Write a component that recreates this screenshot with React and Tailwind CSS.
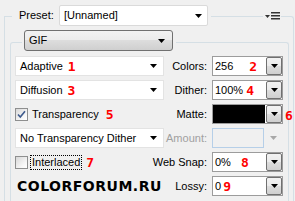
import React from "react";

const Tri = ({ color = "#000" }) => (
  <svg width="7" height="4" viewBox="0 0 7 4" className="block">
    <path d="M0 0h7L3.5 4z" fill={color} />
  </svg>
);

const Red = ({ children, className = "" }) => (
  <span className={"font-['DejaVu_Sans_Mono',monospace] font-bold text-[13px] leading-none text-[#ff0000] " + className}>
    {children}
  </span>
);

const LeftSelect = ({ children }) => (
  <div className="w-[149px] h-[20px] bg-white border border-[#e3e3e3] flex items-center justify-between pl-[4px] pr-[6px]">
    <div className="flex items-center whitespace-nowrap">{children}</div>
    <Tri />
  </div>
);

const DropBtn = () => (
  <div className="w-[16px] h-[18px] border border-[#707070] rounded-[2px] bg-[linear-gradient(#f2f2f2_0%,#ebebeb_50%,#dddddd_50%,#cfcfcf_100%)] flex items-center justify-center">
    <Tri />
  </div>
);

const Combo = ({ children }) => (
  <div className="w-[71px] h-[20px] bg-white border border-[#9c9c9c] flex items-center">
    <div className="flex-1 flex items-center pl-[2px] whitespace-nowrap">{children}</div>
    <DropBtn />
  </div>
);

const Label = ({ children, disabled }) => (
  <div className={"flex-1 min-w-0 flex justify-end whitespace-nowrap pr-[5px] " + (disabled ? "text-[#a0a0a0]" : "text-black")}>
    <span>{children}</span>
  </div>
);

const Checkbox = ({ checked }) => (
  <div className="w-[13px] h-[13px] shrink-0 border border-[#8e8f8f] bg-[linear-gradient(135deg,#d8d8d8,#f7f7f7_70%,#ffffff)] flex items-center justify-center">
    {checked && (
      <svg width="9" height="9" viewBox="0 0 9 9">
        <path d="M1 4.5l2.3 2.5L8 1.2" stroke="#3d5a8c" strokeWidth="1.6" fill="none" />
      </svg>
    )}
  </div>
);

export default function App() {
  return (
    <div className="w-[295px] h-[201px] overflow-hidden bg-[#f0f0f0] pt-[16px] pl-[4px] pr-[1px] text-[11px] leading-none text-black font-['Liberation_Sans',Arial,sans-serif]">
      <div className="h-[220px] border-t border-l border-r border-[#d5dfe5] rounded-tr-[3px]">
        {/* header */}
        <div className="flex items-center h-[21px] -mt-[12px]">
          <div className="w-[7px]" />
          <div className="bg-[#f0f0f0] h-full flex items-center pl-[7px] w-[47px]">Preset:</div>
          <div className="w-[149px] h-[21px] bg-white border border-[#dadada] rounded-[2px] flex items-center justify-between pl-[4px] pr-[5px]">
            <span>[Unnamed]</span>
            <Tri />
          </div>
          <div className="bg-[#f0f0f0] w-[3px] h-full" />
          <div className="flex-1" />
          <div className="bg-[#f0f0f0] w-[18px] h-full flex items-center justify-center">
            <svg width="15" height="8" viewBox="0 0 15 8">
              <path d="M0 3h5L2.5 6z" fill="#333" />
              <rect x="6" y="0" width="9" height="1.5" fill="#333" />
              <rect x="6" y="3" width="9" height="1.5" fill="#333" />
              <rect x="6" y="6" width="9" height="1.5" fill="#333" />
            </svg>
          </div>
          <div className="w-[12px]" />
        </div>

        {/* inner frame */}
        <div className="mt-[16px] ml-[5px] mr-[4px] h-[200px] border-t border-l border-r border-[#d5dfe5] rounded-t-[3px]">
          <div className="flex -mt-[13px]">
            <div className="w-[11px]" />
            <div className="bg-[#f0f0f0] pl-[2px] pr-[3px]">
              <div className="w-[149px] h-[21px] border border-[#707070] rounded-[3px] bg-[linear-gradient(#f2f2f2_0%,#ebebeb_50%,#dddddd_50%,#cfcfcf_100%)] flex items-center justify-between pl-[4px] pr-[7px]">
                <span>GIF</span>
                <Tri />
              </div>
            </div>
          </div>

          <div className="mt-[5px] pl-[4px] pr-[5px] flex flex-col gap-[4px]">
            <div className="flex items-center h-[20px]">
              <LeftSelect>
                <span>Adaptive</span>
                <Red className="ml-[5px]">1</Red>
              </LeftSelect>
              <Label>Colors:</Label>
              <Combo>
                <span>256</span>
                <Red className="ml-[16px]">2</Red>
              </Combo>
            </div>

            <div className="flex items-center h-[20px]">
              <LeftSelect>
                <span>Diffusion</span>
                <Red className="ml-[5px]">3</Red>
              </LeftSelect>
              <Label>Dither:</Label>
              <Combo>
                <span>100%</span>
                <Red className="ml-[3px]">4</Red>
              </Combo>
            </div>

            <div className="flex items-center h-[20px]">
              <div className="w-[149px] flex items-center whitespace-nowrap">
                <Checkbox checked />
                <span className="ml-[4px]">Transparency</span>
                <Red className="ml-[7px]">5</Red>
              </div>
              <Label>Matte:</Label>
              <div className="relative w-[71px] h-[20px] bg-white border border-[#9c9c9c] flex items-center">
                <div className="flex-1 h-[18px] bg-black mr-[1px]" />
                <DropBtn />
                <Red className="absolute left-[72px] top-[4px]">6</Red>
              </div>
            </div>

            <div className="flex items-center h-[20px]">
              <LeftSelect>
                <span>No Transparency Dither</span>
              </LeftSelect>
              <Label disabled>Amount:</Label>
              <div className="w-[71px] h-[20px] flex items-center">
                <div className="w-[52px] h-[20px] border border-[#b6cfe8] bg-[#f0f0f0]" />
                <div className="flex-1 flex items-center justify-center">
                  <Tri color="#a8a8a8" />
                </div>
              </div>
            </div>

            <div className="flex items-center h-[20px]">
              <div className="w-[149px] flex items-center whitespace-nowrap">
                <Checkbox />
                <span className="ml-[2px] px-[1px] py-[1px] border border-dotted border-black">Interlaced</span>
                <Red className="ml-[4px]">7</Red>
              </div>
              <Label>Web Snap:</Label>
              <Combo>
                <span>0%</span>
                <Red className="ml-[10px]">8</Red>
              </Combo>
            </div>

            <div className="flex items-center h-[20px]">
              <div className="w-[149px] flex items-center pl-[2px] whitespace-nowrap">
                <span className="font-['DejaVu_Sans',sans-serif] font-bold text-[14px] tracking-[0.5px]">COLORFORUM.RU</span>
              </div>
              <Label>Lossy:</Label>
              <Combo>
                <span>0</span>
                <Red className="ml-[2px]">9</Red>
              </Combo>
            </div>
          </div>
        </div>
      </div>
    </div>
  );
}
